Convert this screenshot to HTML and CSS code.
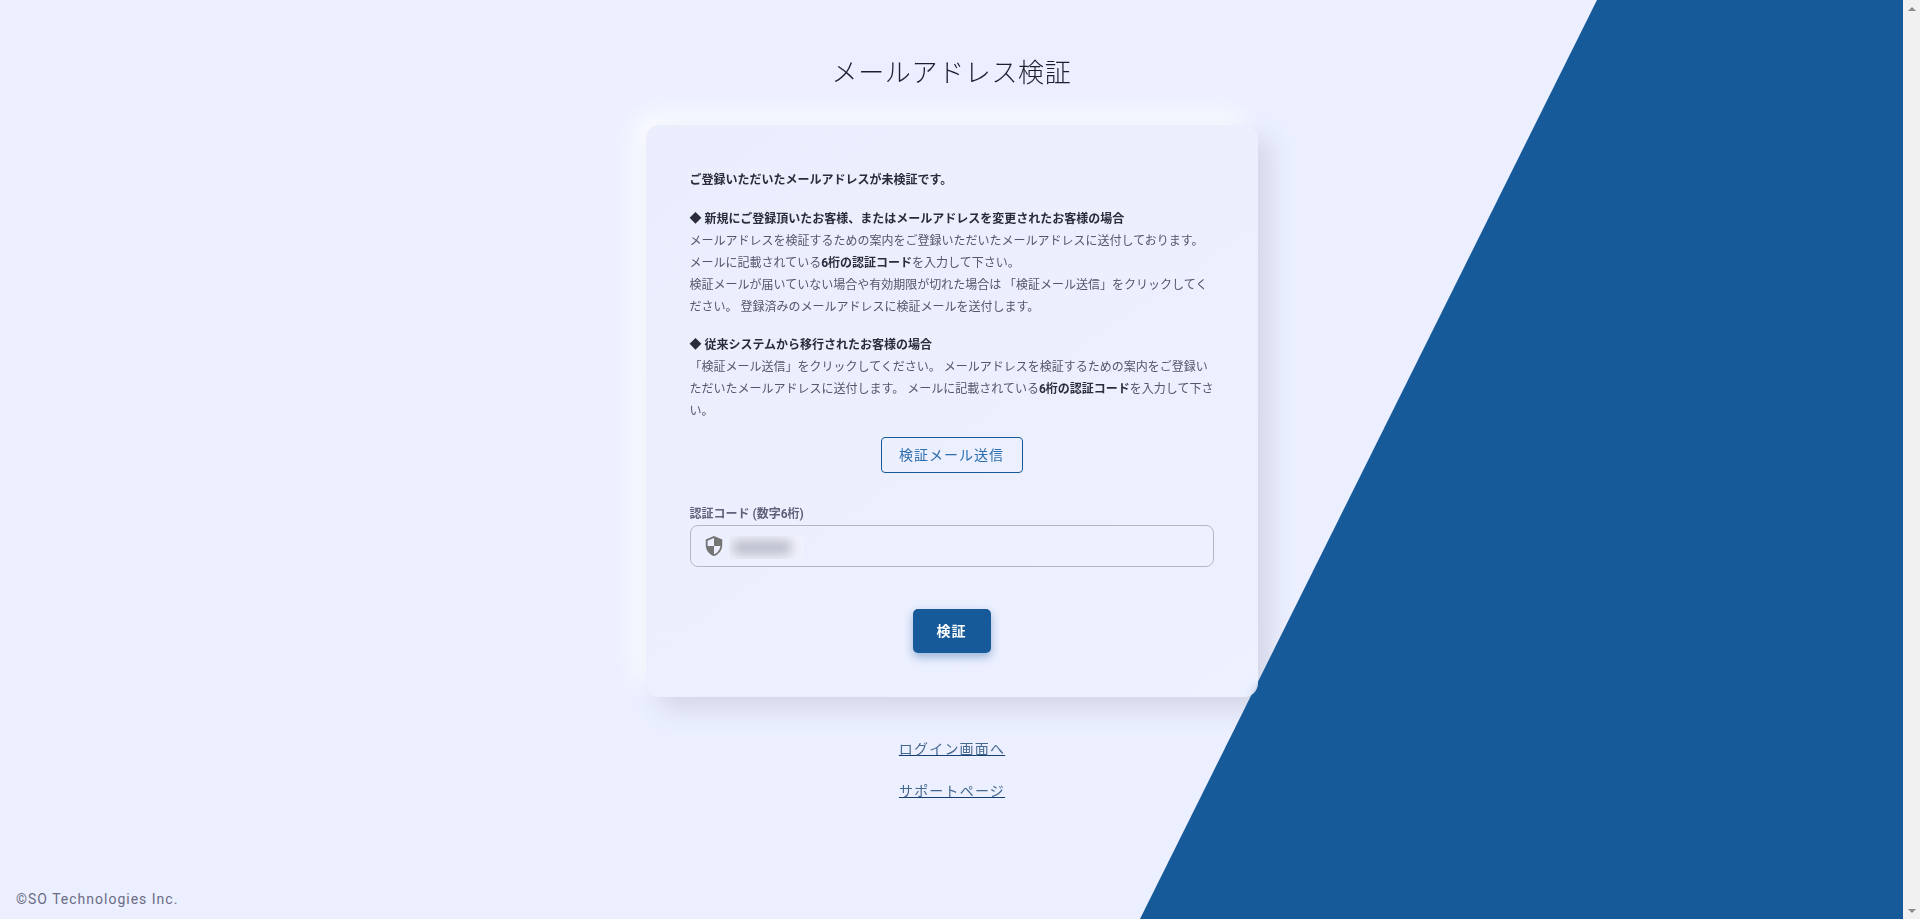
FILE: index.html
```html
<!DOCTYPE html>
<html lang="ja">
<head>
<meta charset="utf-8">
<title>メールアドレス検証</title>
<link rel="stylesheet" href="styles.css">
</head>
<body>
<div class="app">
  <main class="page">
    <div class="wedge"></div>
    <h1 class="title">メールアドレス検証</h1>
    <section class="card">
      <p class="lead"><strong>ご登録いただいたメールアドレスが未検証です。</strong></p>
      <p class="para"><strong>◆ 新規にご登録頂いたお客様、またはメールアドレスを変更されたお客様の場合</strong><br>メールアドレスを検証するための案内をご登録いただいたメールアドレスに送付しております。<br>メールに記載されている<strong>6桁の認証コード</strong>を入力して下さい。<br>検証メールが届いていない場合や有効期限が切れた場合は 「検証メール送信」をクリックしてください。 登録済みのメールアドレスに検証メールを送付します。</p>
      <p class="para"><strong>◆ 従来システムから移行されたお客様の場合</strong><br>「検証メール送信」をクリックしてください。 メールアドレスを検証するための案内をご登録いただいたメールアドレスに送付します。 メールに記載されている<strong>6桁の認証コード</strong>を入力して下さい。</p>
      <div class="send-row"><button class="btn-outline" type="button">検証メール送信</button></div>
      <label class="field-label" for="code">認証コード (数字6桁)</label>
      <div class="field">
        <svg class="shield" viewBox="0 0 24 24"><path d="M12 1L3 5v6c0 5.55 3.84 10.74 9 12 5.16-1.26 9-6.45 9-12V5l-9-4zm0 10.99h7c-.53 4.12-3.28 7.79-7 8.94V12H5V6.3l7-3.11v8.8z"/></svg>
        <div class="masked"><span class="smudge"></span></div>
        <input class="input" id="code" type="text" aria-label="認証コード">
      </div>
      <div class="submit-row"><button class="btn-primary" type="button">検証</button></div>
    </section>
    <nav class="links">
      <a href="#">ログイン画面へ</a>
      <a href="#">サポートページ</a>
    </nav>
    <footer class="copy">©SO Technologies Inc.</footer>
  </main>
  <div class="scrollbar">
    <span class="arrow up"></span>
    <span class="arrow down"></span>
  </div>
</div>
</body>
</html>
```
FILE: styles.css
```css
* { box-sizing: border-box; }
html, body { margin: 0; height: 100%; overflow: hidden; }
body {
  background: #ebefff;
  color: #2b2b3a;
  font-family: Roboto, "Noto Sans CJK JP", sans-serif;
}
.app { display: flex; height: 919px; }
.page {
  position: relative;
  isolation: isolate;
  flex: 1;
  min-width: 0;
  display: flex;
  flex-direction: column;
  align-items: center;
  overflow: hidden;
  padding-top: 56px;
}
.wedge {
  position: absolute;
  inset: 0;
  z-index: -1;
  background: #165a99;
  clip-path: polygon(1597px 0, 100% 0, 100% 100%, 1140px 100%);
}
.title {
  margin: 0 0 34px;
  font-size: 26px;
  line-height: 35px;
  font-weight: 300;
  letter-spacing: 0.65px;
  color: #1f1f2c;
}
.card {
  position: relative;
  width: 612px;
  height: 572px;
  padding: 44px 44px 0;
  font-size: 12px;
  line-height: 22px;
  color: #55566a;
}
.card::before {
  content: "";
  position: absolute;
  inset: 0;
  z-index: -2;
  border-radius: 14px;
  box-shadow: 12px 12px 24px #d3d6e6, -12px -12px 24px #fbfcff;
}
.card::after {
  content: "";
  position: absolute;
  inset: 0;
  z-index: -1;
  border-radius: 14px;
  background: linear-gradient(145deg, rgba(233, 237, 252, .75), rgba(238, 241, 255, .75));
  backdrop-filter: blur(4px);
}
.card strong { color: #2b2b3a; font-weight: 700; }
.lead { margin: 0 0 17px; }
.para { margin: 0 0 16px; }
.para:last-of-type { margin-bottom: 15px; }
.send-row { display: flex; justify-content: center; }
.btn-outline {
  width: 142px;
  height: 36px;
  border: 1.5px solid #165a99;
  border-radius: 4px;
  background: transparent;
  color: #2f6fae;
  font: 400 14px/1 Roboto, "Noto Sans CJK JP", sans-serif;
  letter-spacing: 1px;
}
.field-label {
  display: block;
  margin-top: 30px;
  height: 22px;
  font-weight: 700;
  color: #5f607a;
}
.field {
  position: relative;
  height: 42px;
  border: 1px solid #b4b6c4;
  border-radius: 8px;
}
.input {
  position: absolute;
  inset: 0;
  width: 100%;
  border: 0;
  background: transparent;
  outline: 0;
}
.shield {
  position: absolute;
  left: 12px;
  top: 9px;
  width: 22px;
  height: 22px;
  fill: #757575;
}
.masked {
  position: absolute;
  left: 38px;
  top: 10px;
  width: 75px;
  height: 23px;
  background: #f0f2fd;
  overflow: hidden;
}
.smudge {
  display: block;
  margin: 5px 4px;
  height: 13px;
  width: 58px;
  background: #b4b6c4;
  filter: blur(6px);
}
.submit-row { display: flex; justify-content: center; margin-top: 42px; }
.btn-primary {
  width: 78px;
  height: 44px;
  border: 0;
  border-radius: 5px;
  background: #165a99;
  color: #fff;
  font: 700 14px/1 Roboto, "Noto Sans CJK JP", sans-serif;
  letter-spacing: 1px;
  box-shadow: 0 4px 10px rgba(22, 90, 153, .4);
}
.links {
  display: flex;
  flex-direction: column;
  align-items: center;
  gap: 19px;
  margin-top: 41px;
  padding-left: 1px;
}
.links a {
  font-size: 14px;
  line-height: 23px;
  letter-spacing: 1.2px;
  color: #46688f;
  text-decoration: underline;
  text-decoration-color: #153f73;
}
.copy {
  position: absolute;
  left: 16px;
  bottom: 10px;
  font-size: 14px;
  line-height: 20px;
  letter-spacing: 1px;
  color: #6b6c85;
}
.scrollbar {
  width: 17px;
  flex: none;
  background: #f1f1f1;
  display: flex;
  flex-direction: column;
  justify-content: space-between;
  align-items: center;
  padding: 7px 0 6px;
}
.arrow { width: 0; height: 0; border-left: 4px solid transparent; border-right: 4px solid transparent; }
.arrow.up { border-bottom: 4px solid #8a8a8a; }
.arrow.down { border-top: 4px solid #8a8a8a; }
```
